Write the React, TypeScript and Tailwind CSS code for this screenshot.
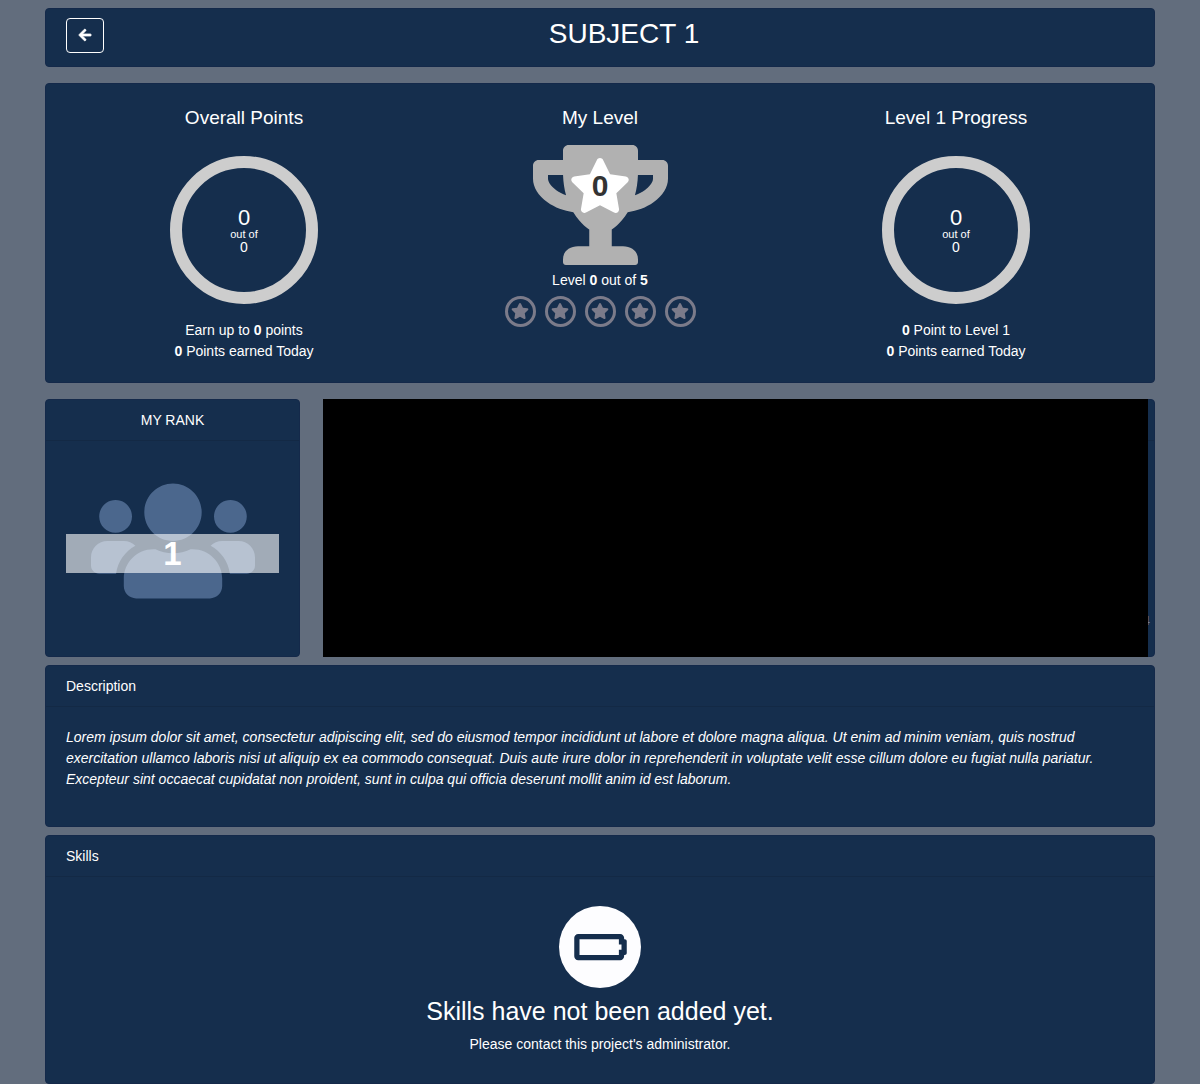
import type { ReactNode } from "react";
import { FaArrowLeft, FaBatteryEmpty, FaStar, FaTrophy, FaUsers } from "react-icons/fa";

const cardClass = "rounded border border-[#14294a] bg-[#152e4d]";

function CardHeader({ children, centered }: { children?: ReactNode; centered?: boolean }) {
  return (
    <h2
      className={
        centered
          ? "h-[41px] border-b border-[#132945] px-5 pt-[10px] text-center"
          : "h-[41px] border-b border-[#132945] px-5 pt-[10px]"
      }
    >
      {children}
    </h2>
  );
}

function ProgressRing({ value, total }: { value: number; total: number }) {
  return (
    <div className="mt-6 flex h-[148px] w-[148px] flex-col items-center justify-center rounded-full border-12 border-[#cdcdcd] pt-[2px]">
      <span className="text-[22px] leading-5">{value}</span>
      <span className="text-[11px] leading-3">out of</span>
      <span className="leading-[14px]">{total}</span>
    </div>
  );
}

function Stat({ title, children }: { title: string; children: ReactNode }) {
  return (
    <section className="flex flex-1 flex-col items-center">
      <h2 className="text-[19px] leading-7">{title}</h2>
      {children}
    </section>
  );
}

export default function App() {
  return (
    <main className="flex min-h-screen flex-col bg-[#626d7d] px-[45px] pt-2 font-['Liberation_Sans',Arial,sans-serif] text-sm leading-[21px] text-white">
      <header className={`${cardClass} flex items-start gap-[10px] px-5 pt-[9px] pb-[13px]`}>
        <button
          type="button"
          aria-label="Back"
          className="flex h-[35px] w-[38px] items-center justify-center rounded border border-white pb-px"
        >
          <FaArrowLeft size={14} strokeWidth={24} />
        </button>
        <h1 className="flex-1 text-center text-[28px] leading-8">SUBJECT 1</h1>
      </header>

      <div className={`${cardClass} mt-4 flex px-5 pt-5 pb-5`}>
        <Stat title="Overall Points">
          <ProgressRing value={0} total={0} />
          <p className="mt-4 text-center">
            Earn up to <b>0</b> points
            <br />
            <b>0</b> Points earned Today
          </p>
        </Stat>
        <Stat title="My Level">
          <div className="relative mt-[13px]">
            <FaTrophy className="h-[120px] w-[135px] text-[#b1b1b1]" />
            <FaStar className="absolute top-[13px] left-1/2 h-[55px] w-[62px] -translate-x-1/2 text-white" />
            <span className="absolute inset-x-0 top-6 text-center text-[30px] leading-[34px] font-bold text-[#333333]">0</span>
          </div>
          <p className="mt-[5px]">
            Level <b>0</b> out of <b>5</b>
          </p>
          <div className="mt-[5px] flex gap-[9px]">
            {[1, 2, 3, 4, 5].map((level) => (
              <span
                key={level}
                className="flex h-[31px] w-[31px] items-center justify-center rounded-full border-3 border-[#7b7b8a] pb-px text-[#7b7b8a]"
              >
                <FaStar className="h-4 w-[18px]" />
              </span>
            ))}
          </div>
        </Stat>
        <Stat title="Level 1 Progress">
          <ProgressRing value={0} total={0} />
          <p className="mt-4 text-center">
            <b>0</b> Point to Level 1
            <br />
            <b>0</b> Points earned Today
          </p>
        </Stat>
      </div>

      <div className="mt-4 grid grid-cols-[255fr_832fr] gap-[23px]">
        <section className={cardClass}>
          <CardHeader centered>MY RANK</CardHeader>
          <div className="px-5 pt-[34px] pb-[49px]">
            <div className="relative flex justify-center">
              <FaUsers className="h-[132px] w-[164px] text-[#4b678d]" />
              <div className="absolute inset-x-0 top-[59px] h-[39px] bg-white/60 text-center text-[33px] leading-10 font-bold">
                1
              </div>
            </div>
          </div>
        </section>
        <section className={`${cardClass} relative`}>
          <CardHeader />
          <span className="absolute right-1 bottom-[25px] text-[13px] text-[#74849a]">4</span>
          <div className="absolute -top-px right-[6px] -bottom-px -left-px bg-black" />
        </section>
      </div>

      <section className={`${cardClass} mt-2`}>
        <CardHeader>Description</CardHeader>
        <p className="px-5 pt-5 pb-9 italic">
          Lorem ipsum dolor sit amet, consectetur adipiscing elit, sed do eiusmod tempor incididunt ut labore et dolore
          magna aliqua. Ut enim ad minim veniam, quis nostrud exercitation ullamco laboris nisi ut aliquip ex ea commodo
          consequat. Duis aute irure dolor in reprehenderit in voluptate velit esse cillum dolore eu fugiat nulla
          pariatur. Excepteur sint occaecat cupidatat non proident, sunt in culpa qui officia deserunt mollit anim id
          est laborum.
        </p>
      </section>

      <section className={`${cardClass} mt-2`}>
        <CardHeader>Skills</CardHeader>
        <div className="flex flex-col items-center px-5 pt-[29px] pb-7">
          <div className="flex h-[82px] w-[82px] items-center justify-center rounded-full bg-[#fdfdff] text-[#152e4d]">
            <FaBatteryEmpty className="h-[42px] w-[53px]" />
          </div>
          <h3 className="mt-[7px] text-[25px] leading-8">Skills have not been added yet.</h3>
          <p className="mt-[7px]">Please contact this project's administrator.</p>
        </div>
      </section>
    </main>
  );
}
